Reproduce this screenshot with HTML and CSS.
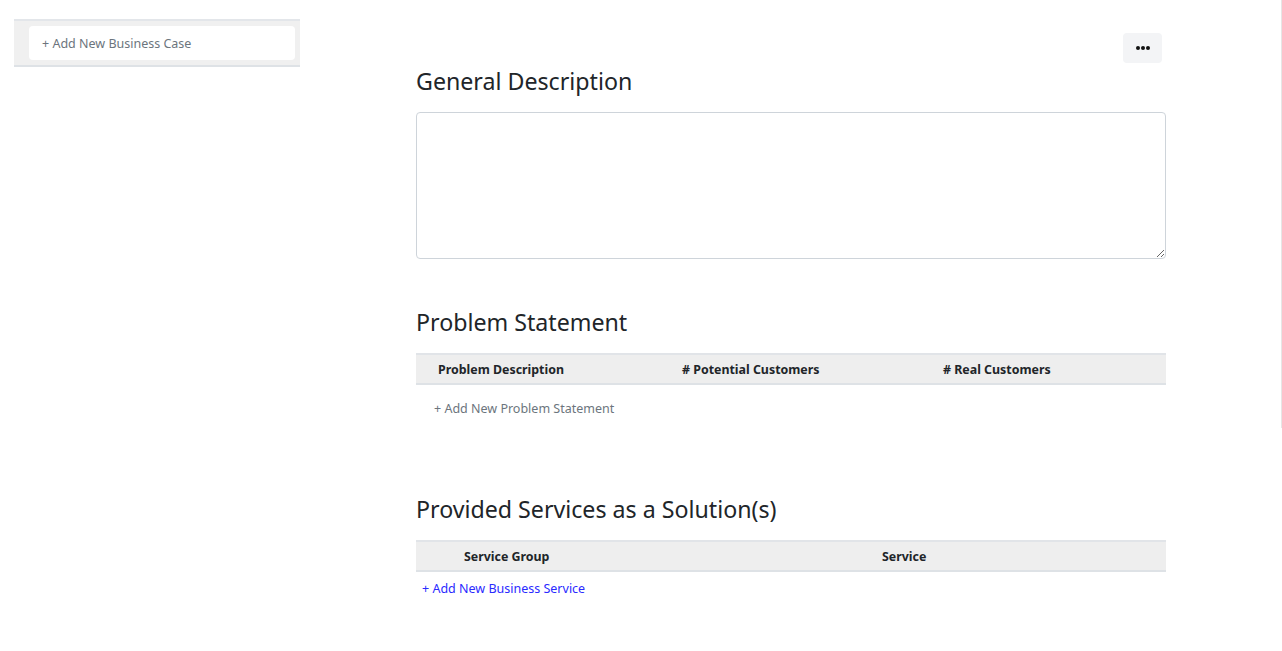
FILE: index.html
```html
<!DOCTYPE html>
<html>
<head>
<meta charset="utf-8">
<link rel="stylesheet" href="styles.css">
</head>
<body>
<div class="page">
  <aside class="sidebar">
    <div class="case-bar">
      <div class="case-add">+ Add New Business Case</div>
    </div>
  </aside>
  <main class="main">
    <div class="toolbar">
      <button class="more-btn"><span class="dot"></span><span class="dot"></span><span class="dot"></span></button>
    </div>
    <h2 class="section-title title-first">General Description</h2>
    <textarea class="desc"></textarea>

    <h2 class="section-title title-problem">Problem Statement</h2>
    <div class="thead thead-problem">
      <div>Problem Description</div>
      <div># Potential Customers</div>
      <div># Real Customers</div>
    </div>
    <div class="add-link gray problem-add">+ Add New Problem Statement</div>

    <h2 class="section-title title-services">Provided Services as a Solution(s)</h2>
    <div class="thead thead-services">
      <div>Service Group</div>
      <div>Service</div>
    </div>
    <div class="add-link blue service-add">+ Add New Business Service</div>
  </main>
  <div class="edge"></div>
</div>
</body>
</html>
```

FILE: styles.css
```css
html, body {
  margin: 0;
  padding: 0;
  background: #ffffff;
}
body {
  font-family: "Segoe UI", "Noto Sans", "Open Sans", sans-serif;
  color: #212529;
}
.page {
  display: flex;
  align-items: flex-start;
  width: 1282px;
}
.sidebar {
  margin-left: 14px;
  margin-top: 19px;
  width: 286px;
}
.case-bar {
  background: #f0f0f0;
  border-top: 2px solid #e3e6ea;
  border-bottom: 2px solid #dee2e6;
  padding: 5px 5px 5px 15px;
}
.case-add {
  background: #ffffff;
  border-radius: 4px;
  height: 33px;
  line-height: 33px;
  padding-top: 1px;
  padding-left: 13px;
  font-size: 12.5px;
  color: #6c757d;
}
.main {
  margin-left: 116px;
  width: 750px;
}
.toolbar {
  display: flex;
  justify-content: flex-end;
  padding-top: 33px;
  padding-right: 4px;
}
.more-btn {
  width: 39px;
  height: 30px;
  border: none;
  border-radius: 4px;
  background: #f3f4f6;
  display: flex;
  align-items: center;
  justify-content: center;
  gap: 1px;
  padding: 0;
}
.dot {
  width: 4px;
  height: 4px;
  border-radius: 50%;
  background: #111111;
}
.section-title {
  font-size: 23.2px;
  font-weight: 400;
  line-height: 29px;
  margin: 0;
  color: #212529;
}
.title-first {
  margin-top: 4px;
}
.desc {
  display: block;
  box-sizing: border-box;
  width: 750px;
  height: 147px;
  margin-top: 16px;
  border: 1px solid #ced4da;
  border-radius: 4px;
  resize: vertical;
  font-family: inherit;
  outline: none;
}
.title-problem {
  margin-top: 49px;
}
.thead {
  display: grid;
  margin-top: 16px;
  height: 27px;
  padding-top: 1px;
  align-items: center;
  background: #eeeeee;
  border-top: 2px solid #e1e4e8;
  border-bottom: 2px solid #dee2e6;
  font-size: 12.4px;
  font-weight: 700;
  color: #212529;
}
.thead-problem {
  grid-template-columns: 244px 261px 1fr;
  padding-left: 22px;
}
.thead-services {
  grid-template-columns: 418px 1fr;
  padding-left: 48px;
}
.add-link {
  font-size: 12.5px;
  line-height: 18px;
}
.gray {
  color: #6c757d;
}
.blue {
  color: #2a2aff;
}
.problem-add {
  margin-top: 15px;
  padding-left: 18px;
}
.title-services {
  margin-top: 77px;
}
.service-add {
  margin-top: 8px;
  padding-left: 6px;
}
.edge {
  margin-left: auto;
  width: 1px;
  height: 428px;
  background: #e6e6e6;
}
```
